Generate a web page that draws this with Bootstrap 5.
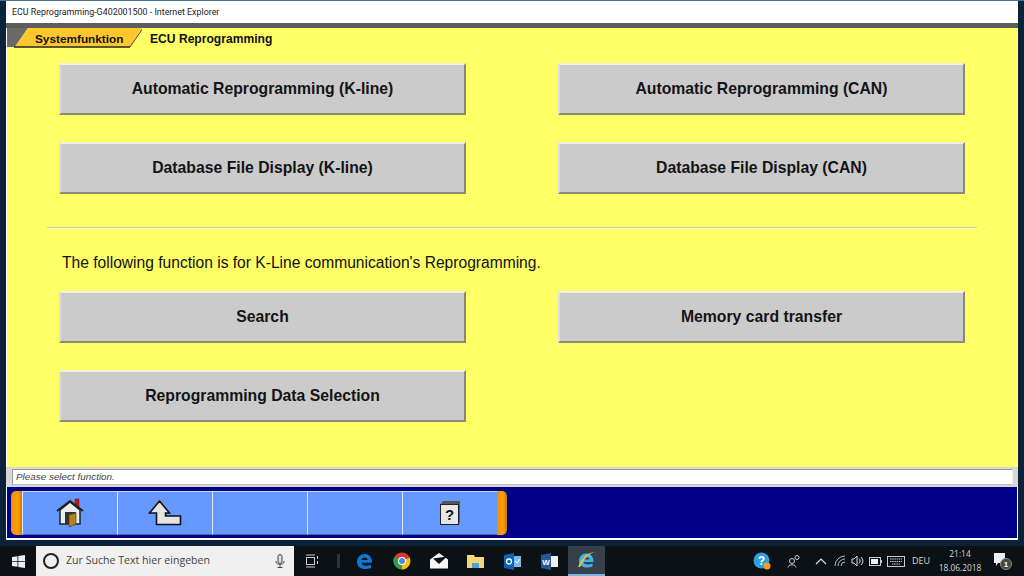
<!DOCTYPE html>
<html lang="de">
<head>
<meta charset="utf-8">
<title>ECU Reprogramming</title>
<link href="https://cdn.jsdelivr.net/npm/bootstrap@5.3.0/dist/css/bootstrap.min.css" rel="stylesheet">
<style>
html,body{height:576px;overflow:hidden;margin:0}
body{background:#0a1a2c;font-family:"Liberation Sans",Arial,sans-serif;color:#111}
.desk{height:576px;display:flex;flex-direction:column}
.winwrap{height:546px;padding:0 6px;background:linear-gradient(#4a7396 0,#4a7396 1px,#0b2238 1px)}
.win{height:539px;margin-top:1px;background:#fff;display:flex;flex-direction:column;border-bottom:2px solid #fff}
.titlebar{height:22px;flex:none;font-family:Roboto,"Liberation Sans",sans-serif;font-size:8.9px;line-height:22px;padding-left:6px;color:#222;background:#fff}
.crumb{height:5px;flex:none;background:#5d5d5d;border-right:1px solid #555}
.main{height:439px;flex:none;background:#ffff66;margin:0 1px}
.crumbs{height:22px;display:flex;align-items:center;font-weight:700;font-size:12.1px;color:#111}
.tab1{width:135px;height:22px;flex:none;position:relative;margin-right:8px}
.tab1 svg{position:absolute;left:0;top:0}
.tab1 span{position:absolute;left:28px;top:3px;line-height:16px;font-size:11.8px}
.gridwrap{padding:13px 52px 0}
.gbtn{display:flex;height:52px;width:407px;align-items:center;justify-content:center;background:#cbcbcb;font-size:15.75px;font-weight:700;color:#141414;border-style:solid;border-width:2px;border-color:#f0f0e4 #87877a #8a8a7a #dedede}
.btnrow{display:flex;justify-content:space-between;margin-bottom:27px}
.sep{height:2px;background:#c9c99a;border-bottom:1px solid #fffbe0;margin:33px -12px 0}
.note{font-size:15.6px;line-height:18px;margin:25px 0 19px 3px;color:#111}
.status{height:20px;flex:none;background:#d8d8d8;padding:2px 5px 2px 6px}
.statusin{height:16px;background:#fff;border:1px solid #9a9a9a;border-right-color:#eee;border-bottom-color:#bbb;font-style:italic;font-size:9.9px;line-height:14px;padding-left:3px;color:#444}
.bar{height:51px;flex:none;background:#000088;display:flex;align-items:center;padding:3px 0 3px 4px;margin:0 1px}
.cap{width:11px;height:44px;background:linear-gradient(90deg,#ee8f10,#ffa000 60%,#c87a10)}
.capl{border-radius:5px 0 0 5px}
.capr{border-radius:0 5px 5px 0;width:10px}
.tool{width:95px;height:44px;background:#6699ff;border-left:1px solid #dfe6f7;border-top:1px solid #c8d4f2;border-bottom:1px solid #50659a;display:flex;align-items:center;justify-content:center;flex:none}
.taskbar{height:30px;flex:none;background:#0c1116;display:flex;align-items:center;color:#ddd}
.start{width:36px;display:flex;justify-content:center}
.search{width:258px;height:30px;background:#f0f0f0;display:flex;align-items:center;padding-left:7px;font-family:"Open Sans","Liberation Sans",sans-serif;font-size:10.6px;color:#444}
.ring{width:16px;height:16px;border:2px solid #222;border-radius:50%;margin-right:7px;flex:none}
.search svg{margin-left:auto;margin-right:9px}
.tb{width:37px;height:30px;display:flex;align-items:center;justify-content:center;flex:none}
.tb.act{background:#36404a;border-bottom:2px solid #7db4e0}
.tbw36{width:36px}
.tbw16{width:16px}
.tray{margin-left:auto;display:flex;align-items:center;height:30px;font-family:"Open Sans","Liberation Sans",sans-serif;font-size:9px;color:#d8d8d8;padding-right:11px}
.gap17{margin-right:16px}
.gap14{margin-right:14px}
.gap7{margin-right:7px}
.gap5{margin-right:5px}
.gap8{margin-right:7px}
.clock{text-align:center;line-height:14px;width:44px;margin:0 11px 0 8px;font-size:8.4px}
</style>
</head>
<body>
<div class="desk">
 <div class="winwrap">
  <div class="win">
   <div class="titlebar">ECU Reprogramming-G402001500 - Internet Explorer</div>
   <div class="crumb"></div>
   <div class="main">
    <div class="crumbs">
     <div class="tab1">
      <svg width="135" height="22" viewBox="0 0 135 22"><path d="M0 0H21L8 19H0Z" fill="#6a6a6a"/><path d="M8 18.500L21 0H135L123 18.500Z" fill="#ffc72e"/><path d="M7 19H123" stroke="#222" stroke-width="1.300"/><path d="M123 19L136 0" stroke="#444" stroke-width="1"/></svg>
      <span>Systemfunktion</span>
     </div>
     <span>ECU Reprogramming</span>
    </div>
    <div class="gridwrap">
     <div class="btnrow"><div class="gbtn">Automatic Reprogramming (K-line)</div><div class="gbtn">Automatic Reprogramming (CAN)</div></div>
     <div class="btnrow mb-0"><div class="gbtn">Database File Display (K-line)</div><div class="gbtn">Database File Display (CAN)</div></div>
     <div class="sep"></div>
     <p class="note">The following function is for K-Line communication's Reprogramming.</p>
     <div class="btnrow"><div class="gbtn">Search</div><div class="gbtn">Memory card transfer</div></div>
     <div class="btnrow"><div class="gbtn">Reprogramming Data Selection</div></div>
    </div>
   </div>
   <div class="status"><div class="statusin">Please select function.</div></div>
   <div class="bar">
    <div class="cap capl"></div>
    <div class="tool">
     <svg width="30" height="30" viewBox="0 0 30 30"><rect x="20" y="1" width="4" height="8" fill="#d01010" stroke="#333" stroke-width=".5"/><path d="M5 12L15 4L25 12V26H5Z" fill="#eee" stroke="#222" stroke-width="1.500"/><path d="M2 13L15 3L28 13" fill="none" stroke="#222" stroke-width="2"/><rect x="10" y="14" width="11" height="12" fill="#333"/><path d="M14 17L21 15V26L14 29Z" fill="#b9801e" stroke="#5a3c08" stroke-width=".7"/></svg>
    </div>
    <div class="tool">
     <svg width="34" height="28" viewBox="0 0 34 28"><path d="M1.500 14L11.500 2L21.500 14H17.500V17H32.500V25.500H8.500V14Z" fill="#e4e4e4" stroke="#111" stroke-width="1.600"/></svg>
    </div>
    <div class="tool"></div>
    <div class="tool"></div>
    <div class="tool">
     <svg width="22" height="26" viewBox="0 0 22 26"><path d="M1 5L4 1H21V21L20 25H1Z" fill="#555"/><rect x="1.500" y="4.500" width="18" height="20" fill="#e6e6e6" stroke="#222"/><text x="10.500" y="20" text-anchor="middle" font-family="Liberation Sans" font-weight="700" font-size="15" fill="#111">?</text></svg>
    </div>
    <div class="cap capr"></div>
   </div>
  </div>
 </div>
 <div class="taskbar">
  <div class="start"><svg width="13" height="13" viewBox="0 0 13 13" fill="#eee"><path d="M0 2L5.500 1.200V6.200H0ZM6.300 1L13 0V6.200H6.300ZM0 7H5.500V11.800L0 11ZM6.300 7H13V13L6.300 12Z"/></svg></div>
  <div class="search"><span class="ring"></span><span>Zur Suche Text hier eingeben</span>
   <svg width="10" height="14" viewBox="0 0 10 14"><rect x="3" y="0.500" width="4" height="9" rx="2" fill="#ddd" stroke="#444"/><path d="M1 7V8C1 11 9 11 9 8V7M5 11V13.500M2.500 13.500H7.500" fill="none" stroke="#444"/></svg>
  </div>
  <div class="tb tbw36"><svg width="14" height="14" viewBox="0 0 14 14" fill="none" stroke="#ccc"><rect x="1.500" y="3.500" width="8" height="7"/><path d="M1 1H10M1 13H10M12.500 2V5M12.500 7V10"/></svg></div>
  <div class="tb tbw16"><svg width="3" height="14"><rect width="3" height="14" fill="#333"/></svg></div>
  <div class="tb"><svg width="17" height="17" viewBox="0 0 17 17"><path d="M1 9C1 4 4.500 1 9 1C13.500 1 16 4.500 16 9.800H5.500C6 13 11 13.500 15 11.500V15C10 17 1 16.500 1 9ZM5.500 7H11.500C11.500 3.800 6 3.800 5.500 7Z" fill="#0a78d4" fill-rule="evenodd"/></svg></div>
  <div class="tb"><svg width="18" height="18" viewBox="0 0 18 18"><circle cx="9" cy="9" r="8.500" fill="#d93a2b"/><path d="M9 9L16.500 5.500A8.500 8.500 0 0 1 9 17.500Z" fill="#f6c10f"/><path d="M9 9L9 17.500A8.500 8.500 0 0 1 1.800 4.500Z" fill="#2fa04a"/><circle cx="9" cy="9" r="4" fill="#fff"/><circle cx="9" cy="9" r="3" fill="#4a86e8"/></svg></div>
  <div class="tb"><svg width="20" height="16" viewBox="0 0 20 16"><path d="M1 6.500L10 0L19 6.500V15.500H1Z" fill="#f6f6f6"/><path d="M4 5.500L18 3.500L10 11Z" fill="#0c1116"/></svg></div>
  <div class="tb"><svg width="17" height="15" viewBox="0 0 17 15"><path d="M0 1H7L8 3H17V14H0Z" fill="#f2d777"/><rect x="5" y="9" width="7" height="5" fill="#4aa3df"/></svg></div>
  <div class="tb"><svg width="17" height="17" viewBox="0 0 17 17"><rect x="8" y="3" width="9" height="11" fill="#7cb8ea"/><path d="M0 2L10 0V17L0 15Z" fill="#0a64b4"/><circle cx="5" cy="8.500" r="2.500" fill="none" stroke="#fff" stroke-width="1.300"/><path d="M11 8L13 10L16 6" fill="none" stroke="#fff"/></svg></div>
  <div class="tb"><svg width="17" height="17" viewBox="0 0 17 17"><rect x="8" y="3" width="9" height="11" fill="#eee"/><path d="M0 2L10 0V17L0 15Z" fill="#2b5797"/><text x="5" y="12" text-anchor="middle" font-size="8" font-weight="700" font-family="Liberation Sans" fill="#fff">W</text></svg></div>
  <div class="tb act"><svg width="19" height="19" viewBox="0 0 19 19"><path d="M2 10C2 5 5.500 2.500 9.500 2.500C14 2.500 16.500 6 16.500 11H6.500C7 14 12 14 15.500 12.500V15.500C10 18 2 16 2 10ZM6.500 8.500H12.500C12.500 5 7 5 6.500 8.500Z" fill="#3fb6ea" fill-rule="evenodd"/><path d="M1 16C5 6 12 1 18 1C16 1 8 5 3 16Z" fill="#f2c230"/></svg></div>
  <div class="tray">
   <svg class="gap17" width="18" height="18" viewBox="0 0 18 18"><circle cx="8.500" cy="8.500" r="8" fill="#2f9fe0"/><text x="8.500" y="13" text-anchor="middle" font-family="Liberation Sans" font-weight="700" font-size="12" fill="#fff">?</text><circle cx="14" cy="14" r="3.500" fill="#f0a020"/></svg>
   <svg class="gap14" width="14" height="14" viewBox="0 0 14 14" fill="none" stroke="#ccc"><circle cx="5" cy="7" r="2.500"/><path d="M1 13.500C1 10 9 10 9 13.500"/><circle cx="10" cy="3.500" r="2"/></svg>
   <svg class="gap7" width="12" height="8" viewBox="0 0 12 8" fill="none" stroke="#ddd" stroke-width="1.200"><path d="M1 7L6 2L11 7"/></svg>
   <svg class="gap5" width="12" height="12" viewBox="0 0 12 12" fill="none" stroke="#bbb"><path d="M1 11A10 10 0 0 1 11 1M4 11A7 7 0 0 1 11 4M7 11A4 4 0 0 1 11 7"/></svg>
   <svg class="gap5" width="13" height="12" viewBox="0 0 13 12" fill="none" stroke="#ddd"><path d="M1 4H3L6 1V11L3 8H1ZM8 3.500C9.500 5 9.500 7 8 8.500M10 2C12.500 4.500 12.500 7.500 10 10"/></svg>
   <svg class="gap5" width="13" height="9" viewBox="0 0 13 9"><rect x=".5" y=".5" width="11" height="8" fill="none" stroke="#ccc"/><rect x="2" y="2" width="7" height="5" fill="#eee"/><rect x="12" y="3" width="1" height="3" fill="#ccc"/></svg>
   <svg class="gap8" width="18" height="11" viewBox="0 0 18 11" fill="none" stroke="#ccc"><rect x=".5" y=".5" width="17" height="10"/><path d="M3 3H15M3 5.500H15M5 8H13" stroke-dasharray="1.500 .7"/></svg>
   <span>DEU</span>
   <div class="clock">21:14<br>18.06.2018</div>
   <svg width="20" height="18" viewBox="0 0 20 18"><path d="M1 1H12V11H5L3 14V11H1Z" fill="#eee"/><circle cx="13" cy="12" r="5.500" fill="#444" stroke="#888"/><text x="13" y="15" text-anchor="middle" font-family="Liberation Sans" font-size="8" font-weight="700" fill="#fff">1</text></svg>
  </div>
 </div>
</div>
</body>
</html>
